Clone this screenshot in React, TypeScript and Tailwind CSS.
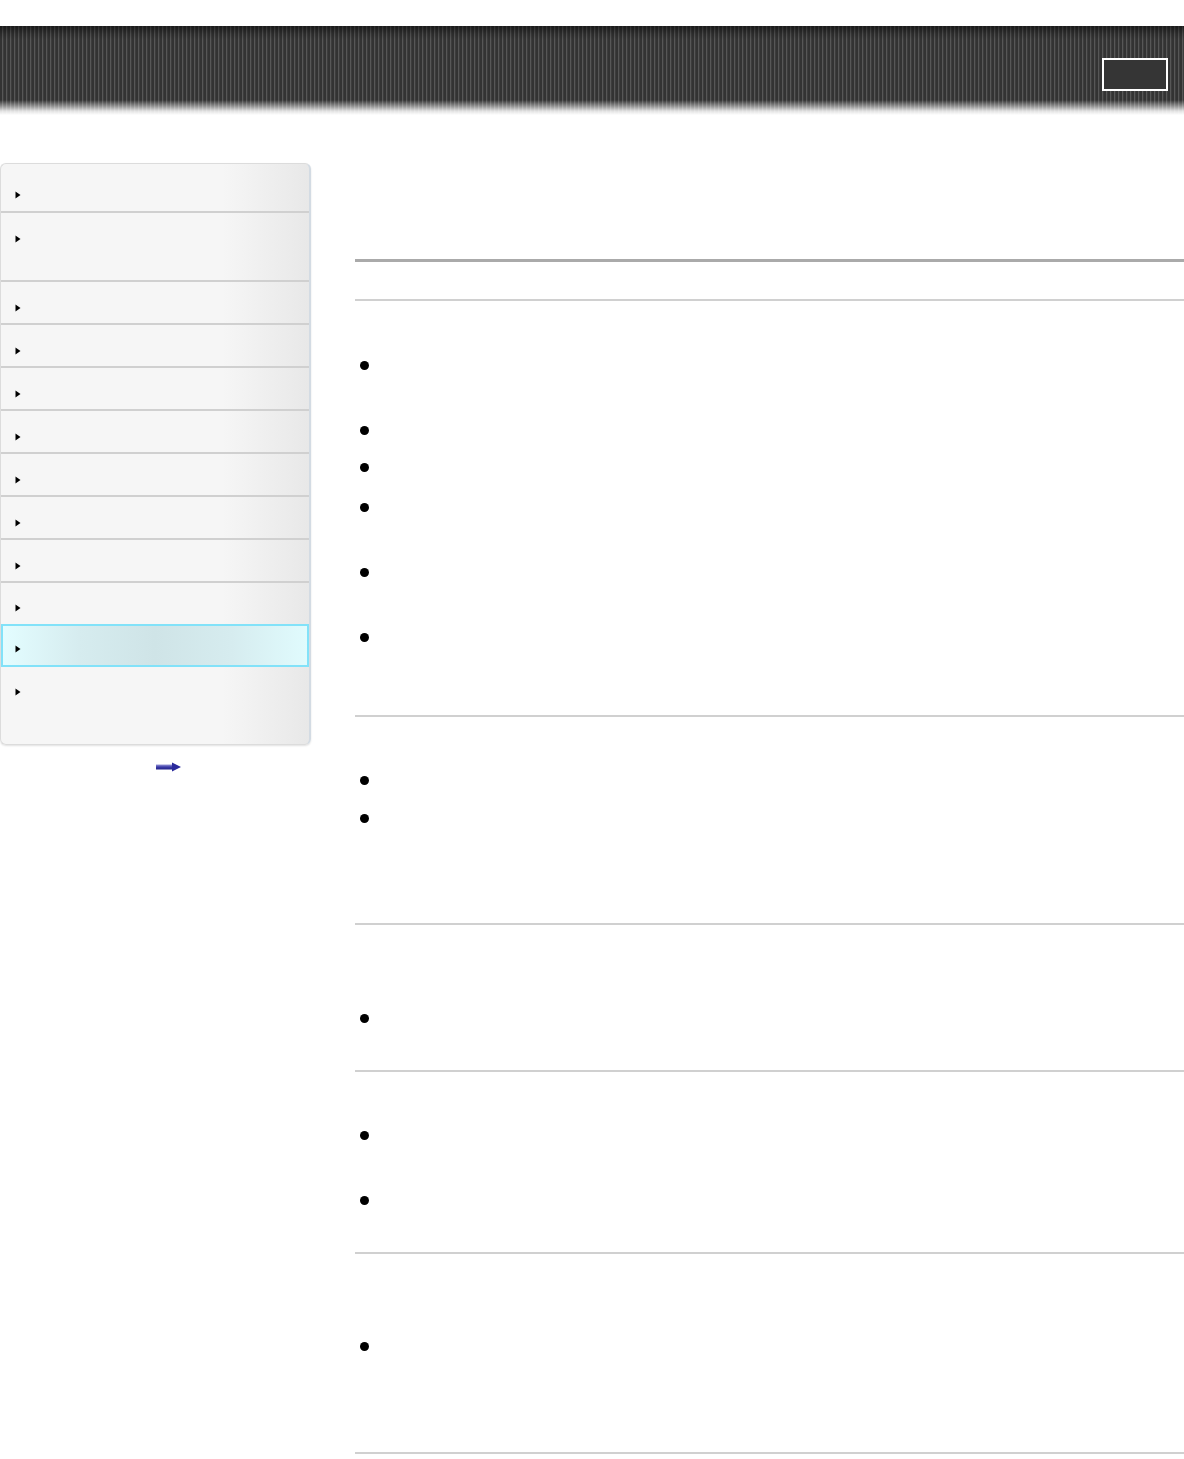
import React from "react";

const rows: { h: number; off: number; active?: boolean }[] = [
  { h: 49, off: 31 },
  { h: 69, off: 26 },
  { h: 43, off: 26 },
  { h: 43, off: 26 },
  { h: 43, off: 26 },
  { h: 43, off: 26 },
  { h: 43, off: 26 },
  { h: 43, off: 26 },
  { h: 43, off: 26 },
  { h: 43, off: 25 },
  { h: 43, off: 25, active: true },
  { h: 77, off: 25 },
];

const sections: { pt: number; items: number[] }[] = [
  { pt: 60, items: [65, 37, 40, 65, 65, 82] },
  { pt: 59, items: [38, 109] },
  { pt: 89, items: [56] },
  { pt: 59, items: [65, 56] },
  { pt: 88, items: [110] },
];

function Tri() {
  return (
    <svg width="6" height="8" viewBox="0 0 6 8" className="block">
      <path d="M0.5 0.5 L5.5 4 L0.5 7.5 Z" fill="#000" />
    </svg>
  );
}

function Arrow() {
  return (
    <svg width="26" height="10" viewBox="0 0 26 10" className="block">
      <defs>
        <linearGradient id="sh" x1="0" x2="0" y1="0" y2="1">
          <stop offset="0" stopColor="#9a9ad8" />
          <stop offset="0.5" stopColor="#3b3ba8" />
          <stop offset="1" stopColor="#22228a" />
        </linearGradient>
      </defs>
      <rect x="0" y="2.5" width="17" height="5" fill="url(#sh)" />
      <path d="M16 0.5 L25 5 L16 9.5 Z" fill="#2a2a9c" />
    </svg>
  );
}

export default function App() {
  return (
    <div className="w-[1184px] min-h-[1459px] bg-white font-['Liberation_Sans',sans-serif] overflow-hidden">
      <div className="h-[26px]" />
      <header className="h-[89px] flex justify-end items-start pt-[32px] pr-[16px] bg-[image:linear-gradient(180deg,rgba(0,0,0,0.5)_0px,rgba(0,0,0,0.15)_8px,rgba(0,0,0,0)_14px,rgba(0,0,0,0)_74px,rgba(255,255,255,0.45)_80px,rgba(255,255,255,0.85)_85px,#ffffff_89px),repeating-linear-gradient(90deg,#333333_0px,#333333_2px,#575757_2px,#575757_3px,#3d3d3d_3px,#3d3d3d_4px)]">
        <div className="w-[66px] h-[33px] border-2 border-white bg-[#353535]" />
      </header>
      <div className="flex pt-[48px]">
        <aside className="w-[311px] shrink-0">
          <div className="rounded-[6px] border border-[#dcdcdc] border-r-[#d3dbe3] border-r-2 overflow-hidden bg-[linear-gradient(90deg,#f6f6f6_0%,#f6f6f6_72%,#e8e8e8_100%)] shadow-[0_1px_2px_rgba(0,0,0,0.12)]">
            {rows.map((r, i) => (
              <div
                key={i}
                style={{ height: r.h }}
                className={
                  r.active
                    ? "border-2 border-[#82e2f9] bg-[linear-gradient(90deg,#e3fdff_0%,#d6ecef_25%,#cfe4e7_50%,#d6ecef_75%,#e0fbfd_100%)] pl-[12px] -mt-[2px]"
                    : i === rows.length - 1
                    ? "pl-[14px]"
                    : "border-b-2 border-[#d0d0d0] pl-[14px]"
                }
              >
                <div style={{ paddingTop: r.active ? r.off - 6 : r.off - 4 }}>
                  <Tri />
                </div>
              </div>
            ))}
          </div>
          <div className="pl-[156px] pt-[17px]">
            <Arrow />
          </div>
        </aside>
        <main className="ml-[44px] flex-1 pt-[96px]">
          <div className="h-[3px] bg-[#aaaaaa]" />
          <div className="h-[37px]" />
          {sections.map((s, si) => (
            <div key={si}>
              <div className="h-[2px] bg-[#d0d0d0]" />
              <div style={{ paddingTop: s.pt }}>
                {s.items.map((h, ii) => (
                  <div key={ii} style={{ height: h }} className="pl-[5px]">
                    <div className="w-[9px] h-[9px] rounded-full bg-black" />
                  </div>
                ))}
              </div>
            </div>
          ))}
          <div className="h-[2px] bg-[#d0d0d0]" />
        </main>
      </div>
    </div>
  );
}
